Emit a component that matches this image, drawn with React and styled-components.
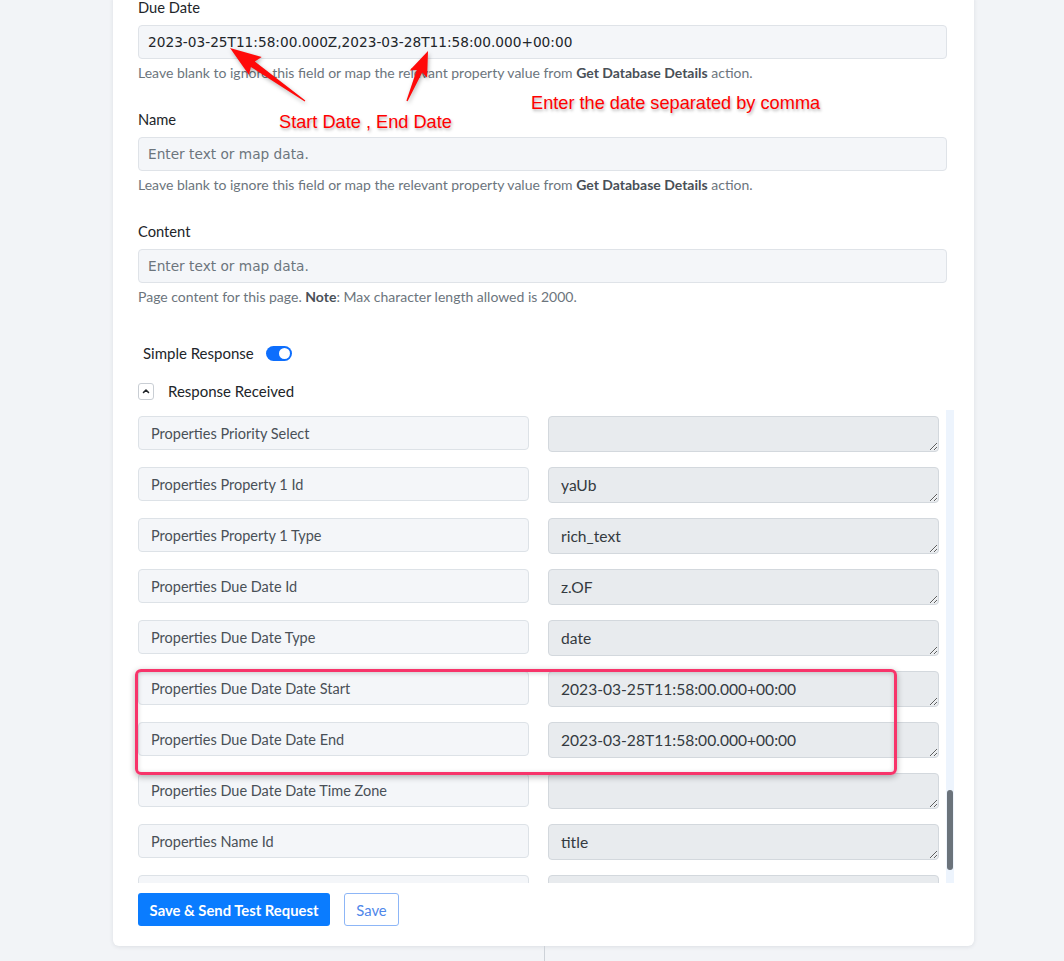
import React, { useLayoutEffect, useRef, useState } from 'react';
import styled, { createGlobalStyle } from 'styled-components';

const GlobalStyle = createGlobalStyle`
  html, body {
    margin: 0;
    padding: 0;
    background: #f2f4f7;
  }
  body {
    font-family: Lato, "Open Sans", sans-serif;
    color: #212529;
    overflow: hidden;
  }
`;

// rows coming back from the Notion "Create Page" step
const props = [
  ['Tags', 'multi_select'],
  ['Status', 'status'],
  ['Assignee', 'people'],
  ['Email', 'email'],
  ['Phone', 'phone_number'],
  ['Website', 'url'],
  ['Done', 'checkbox'],
  ['Amount', 'number'],
  ['Created', 'created_time'],
  ['Updated', 'last_edited_time'],
  ['Files', 'files'],
  ['Project', 'relation'],
  ['Formula', 'formula'],
  ['Budget', 'number'],
  ['Priority', 'select']
];

const responseRows = [
  ['Object', 'page'],
  ['Id', ''],
  ['Created Time', '2023-03-24T11:58:00.000Z'],
  ['Last Edited Time', '2023-03-24T11:58:00.000Z'],
  ['Created By Object', 'user'],
  ['Created By Id', ''],
  ['Last Edited By Object', 'user'],
  ['Last Edited By Id', ''],
  ['Cover', ''],
  ['Icon', ''],
  ['Parent Type', 'database_id'],
  ['Parent Database Id', ''],
  ['Archived', 'false'],
  ['Url', ''],
  ...props.flatMap(([name, type]) => [
    [`Properties ${name} Id`, ''],
    [`Properties ${name} Type`, type]
  ]),
  ['Properties Priority Select', ''],
  ['Properties Property 1 Id', 'yaUb'],
  ['Properties Property 1 Type', 'rich_text'],
  ['Properties Due Date Id', 'z.OF'],
  ['Properties Due Date Type', 'date'],
  ['Properties Due Date Date Start', '2023-03-25T11:58:00.000+00:00'],
  ['Properties Due Date Date End', '2023-03-28T11:58:00.000+00:00'],
  ['Properties Due Date Date Time Zone', ''],
  ['Properties Name Id', 'title'],
  ['Properties Name Type', 'title'],
  ['Properties Name Title', '']
];

const FIRST_VISIBLE = 44;
const ROW_PITCH = 51;

const arrowPoints = (tail, tip, headLen, headW, shaftW) => {
  const dx = tip[0] - tail[0];
  const dy = tip[1] - tail[1];
  const len = Math.hypot(dx, dy);
  const ux = dx / len;
  const uy = dy / len;
  const nx = -uy;
  const ny = ux;
  const bx = tip[0] - ux * headLen;
  const by = tip[1] - uy * headLen;
  const bb = [bx - ux * 3, by - uy * 3];
  const pts = [
    [tail[0] + nx * 0.6, tail[1] + ny * 0.6],
    [bx + nx * shaftW, by + ny * shaftW],
    [bb[0] + nx * headW, bb[1] + ny * headW],
    tip,
    [bb[0] - nx * headW, bb[1] - ny * headW],
    [bx - nx * shaftW, by - ny * shaftW],
    [tail[0] - nx * 0.6, tail[1] - ny * 0.6]
  ];
  return pts.map(p => p.map(v => v.toFixed(1)).join(',')).join(' ');
};

function ResponseList() {
  const scrollRef = useRef(null);
  const [thumb, setThumb] = useState({ top: 0, height: 0 });

  const measure = () => {
    const el = scrollRef.current;
    const track = el.clientHeight;
    const height = Math.max(24, (track * track) / el.scrollHeight);
    const maxScroll = el.scrollHeight - track;
    const top = maxScroll > 0 ? (el.scrollTop / maxScroll) * (track - height) : 0;
    setThumb({ top, height });
  };

  useLayoutEffect(() => {
    scrollRef.current.scrollTop = FIRST_VISIBLE * ROW_PITCH;
    measure();
  }, []);

  return (
    <ScrollFrame>
      <ScrollArea ref={scrollRef} onScroll={measure}>
        <ResponseGrid>
          {responseRows.map(([key, value], i) => (
            <React.Fragment key={i}>
              <KeyInput readOnly value={key} />
              <ValueArea readOnly value={value} />
            </React.Fragment>
          ))}
        </ResponseGrid>
      </ScrollArea>
      <ScrollTrack>
        <ScrollThumb style={{ top: thumb.top, height: thumb.height }} />
      </ScrollTrack>
    </ScrollFrame>
  );
}

export default function App() {
  return (
    <Page>
      <GlobalStyle />
      <Card>
        <Field>
          <Label>Due Date</Label>
          <TextInput defaultValue="2023-03-25T11:58:00.000Z,2023-03-28T11:58:00.000+00:00" />
          <Help>
            Leave blank to ignore this field or map the relevant property value from{' '}
            <b>Get Database Details</b> action.
          </Help>
        </Field>
        <Field>
          <Label>Name</Label>
          <TextInput placeholder="Enter text or map data." />
          <Help>
            Leave blank to ignore this field or map the relevant property value from{' '}
            <b>Get Database Details</b> action.
          </Help>
        </Field>
        <Field>
          <Label>Content</Label>
          <TextInput placeholder="Enter text or map data." />
          <Help>
            Page content for this page. <b>Note</b>: Max character length allowed is 2000.
          </Help>
        </Field>

        <SwitchRow>
          <span>Simple Response</span>
          <Switch $on />
        </SwitchRow>

        <ResponseHeader>
          <CollapseButton>
            <svg width="10" height="10" viewBox="0 0 10 10">
              <path d="M2.5 6.5L5 4l2.5 2.5" fill="none" stroke="#212529" strokeWidth="1.6" strokeLinecap="round" strokeLinejoin="round" />
            </svg>
          </CollapseButton>
          <span>Response Received</span>
        </ResponseHeader>

        <ResponseList />

        <Actions>
          <PrimaryButton>Save &amp; Send Test Request</PrimaryButton>
          <OutlineButton>Save</OutlineButton>
        </Actions>
      </Card>
      <Connector />

      <Arrows width="1064" height="200" viewBox="0 0 1064 200">
        <polygon points={arrowPoints([305, 101], [230, 48], 28, 11, 3.4)} />
        <polygon points={arrowPoints([407, 101], [428, 51], 22, 9.5, 3)} />
      </Arrows>
      <Callout $left={279} $top={112}>Start Date , End Date</Callout>
      <Callout $left={531} $top={93}>Enter the date separated by comma</Callout>
      <Highlight />
    </Page>
  );
}

const Page = styled.div`
  position: relative;
  height: 961px;
  overflow: hidden;
`;

const Card = styled.div`
  width: 861px;
  margin: -3px 0 0 113px;
  box-sizing: border-box;
  padding: 0 27px 20px 25px;
  background: #ffffff;
  border-radius: 0 0 6px 6px;
  box-shadow: 0 1px 4px rgba(30, 40, 60, 0.1);
`;

const Field = styled.div`
  display: flex;
  flex-direction: column;
  & + & {
    margin-top: 26px;
  }
`;

const Label = styled.label`
  font-size: 14.7px;
  line-height: 20px;
  margin-bottom: 8px;
  color: #212529;
`;

const TextInput = styled.input`
  height: 34px;
  box-sizing: border-box;
  border: 1px solid #dfe3e8;
  border-radius: 4px;
  background: #f4f6f9;
  padding: 0 9px;
  font-family: "DejaVu Sans", Verdana, sans-serif;
  font-size: 13.7px;
  color: #212529;
  outline: none;
  &::placeholder {
    color: #6c757d;
  }
`;

const Help = styled.div`
  margin-top: 4px;
  font-size: 14px;
  line-height: 20px;
  color: #6c757d;
  b {
    color: #495057;
    font-weight: 700;
  }
`;

const SwitchRow = styled.div`
  display: flex;
  align-items: center;
  gap: 12px;
  height: 20px;
  margin-top: 36px;
  padding-left: 5px;
  font-size: 15px;
`;

const Switch = styled.span`
  position: relative;
  width: 26px;
  height: 15px;
  border-radius: 8px;
  background: ${p => (p.$on ? '#0d6efd' : '#ced4da')};
  &::after {
    content: '';
    position: absolute;
    top: 2px;
    left: ${p => (p.$on ? '13px' : '2px')};
    width: 11px;
    height: 11px;
    border-radius: 50%;
    background: #ffffff;
  }
`;

const ResponseHeader = styled.div`
  display: flex;
  align-items: center;
  gap: 14px;
  height: 20px;
  margin-top: 18px;
  font-size: 15px;
  color: #212529;
`;

const CollapseButton = styled.button`
  display: flex;
  align-items: center;
  justify-content: center;
  width: 16px;
  height: 17px;
  padding: 0;
  border: 1px solid #c9ced4;
  border-radius: 3px;
  background: #ffffff;
`;

const ScrollFrame = styled.div`
  display: flex;
  width: 816px;
  height: 473px;
  margin-top: 9px;
`;

const ScrollArea = styled.div`
  width: 808px;
  height: 100%;
  overflow-y: scroll;
  scrollbar-width: none;
  &::-webkit-scrollbar {
    display: none;
  }
`;

const ScrollTrack = styled.div`
  position: relative;
  width: 8px;
  height: 100%;
  background: #edf4fd;
`;

const ScrollThumb = styled.div`
  position: absolute;
  left: 1px;
  width: 6px;
  border-radius: 3px;
  background: #6b737b;
`;

const ResponseGrid = styled.div`
  display: grid;
  grid-template-columns: 391px 391px;
  column-gap: 19px;
  row-gap: 15px;
  align-items: start;
  padding-top: 6px;
`;

const KeyInput = styled.input`
  height: 34px;
  box-sizing: border-box;
  border: 1px solid #dde2e7;
  border-radius: 4px;
  background: #f4f6f9;
  padding: 0 12px;
  font-family: Lato, "Open Sans", sans-serif;
  font-size: 14.5px;
  color: #495057;
  outline: none;
`;

const ValueArea = styled.textarea`
  display: block;
  height: 36px;
  box-sizing: border-box;
  border: 1px solid #d3d8dd;
  border-radius: 4px;
  background: #e8ebee;
  padding: 7px 12px 0;
  font-family: Lato, "Open Sans", sans-serif;
  font-size: 15.6px;
  line-height: 20px;
  color: #343a40;
  resize: vertical;
  overflow: hidden;
  outline: none;
`;

const Actions = styled.div`
  display: flex;
  gap: 14px;
  margin-top: 10px;
`;

const PrimaryButton = styled.button`
  width: 192px;
  height: 33px;
  padding: 0;
  border: none;
  border-radius: 3px;
  background: #0a7cff;
  color: #ffffff;
  font-family: Lato, "Open Sans", sans-serif;
  font-size: 14.8px;
  font-weight: 700;
`;

const OutlineButton = styled.button`
  width: 55px;
  height: 33px;
  padding: 0;
  border: 1px solid #8db6f7;
  border-radius: 3px;
  background: #ffffff;
  color: #4f87ea;
  font-family: Lato, "Open Sans", sans-serif;
  font-size: 14.8px;
`;

const Connector = styled.div`
  width: 1px;
  height: 40px;
  margin-left: 544px;
  background: #cdd2d8;
`;

const Arrows = styled.svg`
  position: absolute;
  left: 0;
  top: 0;
  pointer-events: none;
  fill: #ff0a0a;
  filter: drop-shadow(1px 2px 2px rgba(0, 0, 0, 0.3));
`;

const Callout = styled.span`
  position: absolute;
  left: ${p => p.$left}px;
  top: ${p => p.$top}px;
  font-family: "Liberation Sans", Arial, sans-serif;
  font-size: 18.2px;
  line-height: 20px;
  color: #ff0000;
  text-shadow: 1px 2px 3px rgba(0, 0, 0, 0.3);
  white-space: nowrap;
`;

const Highlight = styled.div`
  position: absolute;
  left: 135px;
  top: 669px;
  width: 762px;
  height: 106px;
  box-sizing: border-box;
  border: 3px solid #f7346a;
  border-radius: 6px;
  box-shadow: 0 2px 6px rgba(0, 0, 0, 0.3), inset 0 1px 5px rgba(0, 0, 0, 0.18);
`;
